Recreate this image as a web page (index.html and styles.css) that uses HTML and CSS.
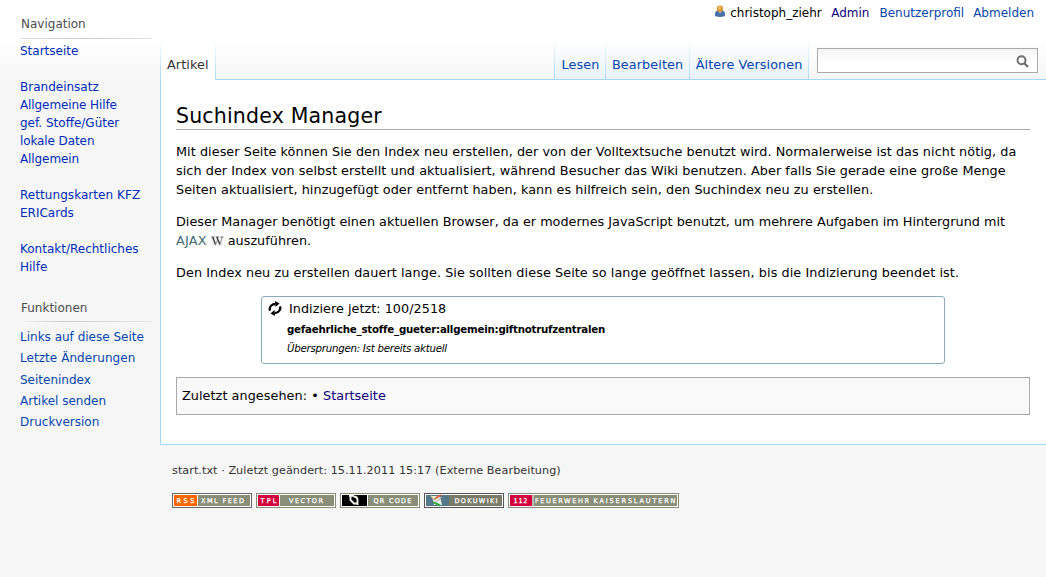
FILE: index.html
```html
<!DOCTYPE html>
<html lang="de">
<head>
<meta charset="utf-8">
<title>Suchindex Manager</title>
<link rel="stylesheet" href="styles.css">
</head>
<body>
<div class="page">
  <aside class="sidebar">
    <h5 class="portal-title">Navigation</h5>
    <nav class="portal-nav">
      <p><a href="#">Startseite</a></p>
      <p><a href="#">Brandeinsatz</a><a class="narrow" href="#">Allgemeine Hilfe</a><a href="#">gef. Stoffe/Güter</a><a class="narrow" href="#">lokale Daten</a><a class="narrow" href="#">Allgemein</a></p>
      <p><a class="wide" href="#">Rettungskarten KFZ</a><a href="#">ERICards</a></p>
      <p><a href="#">Kontakt/Rechtliches</a><a href="#">Hilfe</a></p>
    </nav>
    <h5 class="portal-title faded">Funktionen</h5>
    <ul class="portal-tools">
      <li><a href="#">Links auf diese Seite</a></li>
      <li><a class="wide" href="#">Letzte Änderungen</a></li>
      <li><a href="#">Seitenindex</a></li>
      <li><a href="#">Artikel senden</a></li>
      <li><a href="#">Druckversion</a></li>
    </ul>
  </aside>
  <div class="main">
    <header class="personal">
      <span class="user"><svg width="12" height="13" viewBox="0 0 12 13"><path d="M1 11V9Q1 5.500 4 5.500h4q3 0 3 3.500v2Q6 13 1 11z" fill="#4a70aa"/><path d="M4.500 6h3L6 8.500z" fill="#d5dfef"/><circle cx="6" cy="3.700" r="3.200" fill="#d9992f"/><circle cx="5.500" cy="3" r="1.400" fill="#efc477"/></svg>christoph_ziehr</span>
      <a class="visited" href="#">Admin</a>
      <a href="#">Benutzerprofil</a>
      <a href="#">Abmelden</a>
    </header>
    <div class="tabs">
      <span class="tab selected">Artikel</span>
      <span class="spacer"></span>
      <a class="tab first" href="#">Lesen</a>
      <a class="tab" href="#">Bearbeiten</a>
      <a class="tab" href="#">Ältere Versionen</a>
      <div class="search"><svg width="13" height="13" viewBox="0 0 13 13"><circle cx="5.500" cy="5.300" r="4" fill="none" stroke="#6c6c6c" stroke-width="1.900"/><path d="M8.300 8.300L12 12" stroke="#6c6c6c" stroke-width="2.200"/></svg></div>
    </div>
    <main class="content">
      <h1>Suchindex Manager</h1>
      <p class="intro">Mit dieser Seite können Sie den Index neu erstellen, der von der Volltextsuche benutzt wird. Normalerweise ist das nicht nötig, da sich der Index von selbst erstellt und aktualisiert, während Besucher das Wiki benutzen. Aber falls Sie gerade eine große Menge Seiten aktualisiert, hinzugefügt oder entfernt haben, kann es hilfreich sein, den Suchindex neu zu erstellen.</p>
      <p class="requirements">Dieser Manager benötigt einen aktuellen Browser, da er modernes JavaScript benutzt, um mehrere Aufgaben im Hintergrund mit <a class="interwiki" href="#">AJAX<svg width="14" height="10" viewBox="0 0 14 10"><rect width="12" height="10" fill="#f1f1f1"/><path d="M.5 1h3M5 1h3M9.500 1H12.500" stroke="#555" stroke-width=".8"/><path d="M1.700 1l2.800 7.500M5.800 1l3.100 7.500" stroke="#333" stroke-width="1.300"/><path d="M4.500 8.500L7 3M8.900 8.500L11.300 1" stroke="#666" stroke-width=".7"/></svg></a> auszuführen.</p>
      <p class="note">Den Index neu zu erstellen dauert lange. Sie sollten diese Seite so lange geöffnet lassen, bis die Indizierung beendet ist.</p>
      <section class="status">
        <svg width="14" height="15" viewBox="0 0 14 15"><g fill="none" stroke="#000" stroke-width="2.300"><path d="M2 9.600Q1 6.500 3.300 4.500 5 3 7.500 3"/><path d="M12 5.400Q13 8.500 10.700 10.500 9 12 6.500 12"/></g><path d="M7 0L11.500 2.600 7.600 6zM7 15L2.500 12.400 6.400 9z"/></svg>
        <div class="status-lines">
          <div class="progress">Indiziere jetzt: 100/2518</div>
          <div class="current">gefaehrliche_stoffe_gueter:allgemein:giftnotrufzentralen</div>
          <div class="result">Übersprungen: Ist bereits aktuell</div>
        </div>
      </section>
      <div class="trail">Zuletzt angesehen: • <a class="visited" href="#">Startseite</a></div>
    </main>
    <footer class="footer">
      <div>start.txt · Zuletzt geändert: 15.11.2011 15:17 (Externe Bearbeitung)</div>
      <div class="badges">
        <svg width="80" height="15"><rect width="80" height="15" fill="#666"/><rect x="1" y="1" width="78" height="13" fill="#fff"/><rect x="2" y="2" width="23" height="11" fill="#f60"/><rect x="26" y="2" width="52" height="11" fill="#898e79"/><text x="4.500" y="10" textLength="18">RSS</text><text x="29" y="10" textLength="43">XML FEED</text></svg>
        <svg width="80" height="15"><rect width="80" height="15" fill="#898e79"/><rect x="1" y="1" width="78" height="13" fill="#fff"/><rect x="2" y="2" width="21" height="11" fill="#d2003c"/><rect x="24" y="2" width="54" height="11" fill="#898e79"/><text x="4.500" y="10" textLength="16">TPL</text><text x="33" y="10" textLength="34">VECTOR</text></svg>
        <svg width="80" height="15"><rect width="80" height="15" fill="#898e79"/><rect x="1" y="1" width="78" height="13" fill="#fff"/><rect x="2" y="2" width="25" height="11" fill="#000"/><rect x="28" y="2" width="50" height="11" fill="#898e79"/><path d="M9 2.700h5M10.500 3v4l3 3M13.500 3.500q4 0 4 3.500v5M13 10.500h4" fill="none" stroke="#f2f2ea" stroke-width="1.900"/><text x="33.500" y="10" textLength="38">QR CODE</text></svg>
        <svg width="80" height="15"><rect width="80" height="15" fill="#555"/><rect x="1" y="1" width="78" height="13" fill="#fff"/><rect x="2" y="2" width="23" height="11" fill="#547789"/><rect x="25" y="2" width="53" height="11" fill="#787b69"/><path d="M8 3l8 0 2 9-8 0z" fill="#e9eee2"/><path d="M9.500 6.500L17 2" stroke="#d65a3c" stroke-width="1.800"/><path d="M7 3l4 3" stroke="#f4dda0" stroke-width="1.300"/><path d="M9 9.500l3 1 4 2" fill="none" stroke="#35a642" stroke-width="2"/><path d="M12 9l6-5" stroke="#9eaaa5"/><text x="30.500" y="10" textLength="43">DOKUWIKI</text></svg>
        <svg width="171" height="15"><rect width="171" height="15" fill="#898e79"/><rect x="1" y="1" width="169" height="13" fill="#fff"/><rect x="2" y="2" width="22" height="11" fill="#d2003c"/><rect x="24" y="2" width="2" height="11" fill="#b9bcae"/><rect x="26" y="2" width="143" height="11" fill="#898e79"/><text x="5.500" y="10" textLength="14">112</text><text x="27" y="10" textLength="54">FEUERWEHR</text><text x="85.500" y="10" textLength="82">KAISERSLAUTERN</text></svg>
      </div>
    </footer>
  </div>
</div>
</body>
</html>
```
FILE: styles.css
```css
* { box-sizing: border-box; }
body {
  margin: 0;
  min-height: 577px;
  background: linear-gradient(#fff 40px, #f6f6f6 80px);
  color: #000;
  font-family: "DejaVu Sans", sans-serif;
  font-size: 12.8px;
  line-height: 19px;
}
a { color: #0645ad; text-decoration: none; }
a.visited { color: #0b0080; }
svg { flex: none; }
.page { display: grid; grid-template-columns: 160px 1fr; }

.sidebar { padding: 15px 8px 0 20px; font-size: 12px; line-height: 18px; }
.portal-title {
  margin: 0;
  padding: 0 0 5px 1px;
  color: #4d4d4d;
  font-size: 12px;
  font-weight: normal;
  border-bottom: 1px solid;
  border-image: linear-gradient(90deg, #ddd, #ccc 50%, #e0e0e0) 1;
}
.portal-title.faded { border-image: linear-gradient(90deg, #f6f6f6, #ccc 33%, #e8e8e8) 1; padding-bottom: 4px; }
.portal-nav { padding: 3px 0 23px; }
.portal-nav p { margin: 0 0 18px; }
.portal-nav p:last-child { margin: 0; }
.portal-nav a { display: block; color: #002bb8; }
.narrow { letter-spacing: -.1px; }
.wide { letter-spacing: .06px; }
.portal-tools { list-style: none; margin: 0; padding: 5px 0 0; line-height: 21.25px; }

.personal {
  height: 40px;
  padding: 4px 12px 0 0;
  display: flex;
  justify-content: flex-end;
  gap: 9px;
  font-size: 12px;
  line-height: 18px;
}
.personal .visited { padding-right: 1px; }
.user { display: flex; gap: 4px; margin-right: .5px; }
.user svg { margin-top: 1px; }

.tabs {
  height: 39px;
  display: flex;
  background: linear-gradient(#fff, #f6f6f6);
}
.tab {
  padding: 15px 5.5px 0 6px;
  border-right: 1px solid;
  border-image: linear-gradient(#fff, #a7d7f9) 1;
  background: linear-gradient(#fff, #e8f2f8);
  white-space: nowrap;
  letter-spacing: .1px;
}
.tab.first { border-left: 1px solid; }
.tab.selected {
  position: relative;
  height: 40px;
  padding-right: 6px;
  border-left: 1px solid;
  background: #fff;
  color: #333;
}
.spacer { flex: 1; }
.search {
  width: 221px;
  height: 25px;
  margin: 8px 8px 0;
  border: 1px solid #aaa;
  background: linear-gradient(#f3f3f3, #fff 60%);
  display: flex;
  justify-content: flex-end;
  padding: 6px 8px 0 0;
}

.content {
  height: 366px;
  padding: 24px 16px 0 15px;
  border: solid #a7d7f9;
  border-width: 1px 0 1px 1px;
  background: #fff;
}
h1 {
  margin: 0 0 12px;
  height: 26px;
  border-bottom: 1px solid #aaa;
  font-size: 20.5px;
  font-weight: normal;
  line-height: 24px;
  letter-spacing: .18px;
}
.content p { margin: 0 0 13px; }
.content .intro { letter-spacing: .058px; }
.content .requirements { letter-spacing: .016px; }
.content .note { letter-spacing: .076px; }
.interwiki { color: #436976; letter-spacing: .2px; }
.interwiki svg { margin: 0 -1px 0 4px; vertical-align: -1px; }
.status {
  width: 684px;
  height: 68px;
  margin: 14px auto 13px;
  padding: 2px 6px;
  border: 1px solid #8cacbb;
  border-radius: 3px;
  display: flex;
  gap: 5px;
}
.status svg { margin-top: 2px; }
.progress { padding: 0 0 1px 2px; letter-spacing: .03px; }
.current { font-size: 10.24px; font-weight: bold; line-height: 20px; letter-spacing: -.22px; }
.result { font-size: 10.24px; font-style: italic; line-height: 19px; letter-spacing: -.26px; }
.trail {
  height: 38px;
  padding: 8px 5px;
  border: 1px solid #aaa;
  background: #f9f9f9;
  letter-spacing: .06px;
}

.footer { padding: 16px 12px; font-size: 11.2px; color: #333; letter-spacing: .06px; }
.badges { display: flex; gap: 4px; margin-top: 13px; }
.badges text {
  fill: #fff;
  font: 6.5px "DejaVu Sans", sans-serif;
  stroke: #fff;
  stroke-width: .25px;
}
```
